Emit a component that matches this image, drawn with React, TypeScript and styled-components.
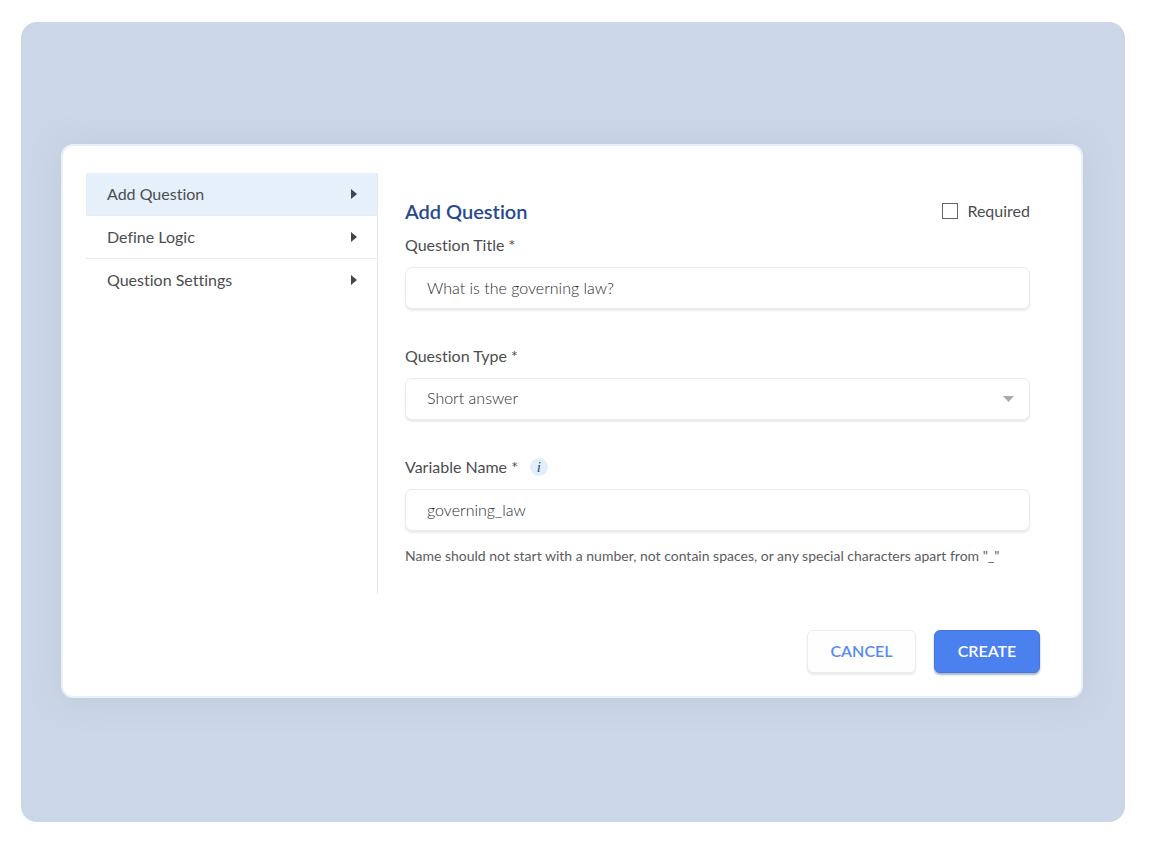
import React, { useState } from "react";
import styled, { createGlobalStyle } from "styled-components";

const GlobalStyle = createGlobalStyle`
  *, *::before, *::after { box-sizing: border-box; }
  body {
    margin: 0;
    background: #ffffff;
    color: #4c4d50;
    font-family: Lato, "Liberation Sans", sans-serif;
    font-size: 16px;
    line-height: 20px;
    font-variant-ligatures: none;
  }
  button, input, select { font: inherit; color: inherit; font-variant-ligatures: none; }
`;

const Page = styled.div`
  min-height: 100vh;
  display: flex;
  padding: 22px 25px 24px 21px;
`;

const Backdrop = styled.main`
  flex: 1;
  min-width: 0;
  display: flex;
  flex-direction: column;
  justify-content: center;
  padding: 40px 42px 42px 40px;
  border-radius: 16px;
  background: #cbd6e8;
`;

const Dialog = styled.form`
  display: flex;
  flex-direction: column;
  gap: 36px;
  padding: 27px 0 23px 23px;
  border: 2px solid #e8f0fa;
  border-radius: 12px;
  background: #ffffff;
  box-shadow: 0 2px 28px rgba(165, 180, 190, 0.35);
`;

const Body = styled.div`
  display: flex;
`;

const Nav = styled.nav`
  flex: 0 0 292px;
  border-right: 1px solid #e6e8ea;
`;

const NavItem = styled.button<{ $active: boolean }>`
  display: flex;
  align-items: center;
  justify-content: space-between;
  width: 100%;
  height: 43px;
  padding: 0 20px 0 21px;
  border: 0;
  border-bottom: 1px solid #e9ebec;
  background: ${(p) => (p.$active ? "#e6f0fa" : "transparent")};
  text-align: left;
  cursor: pointer;

  &:last-child { border-bottom-color: transparent; }
`;

const Panel = styled.section`
  flex: 1;
  min-width: 0;
  padding: 26px 51px 29px 27px;
`;

const PanelHeader = styled.div`
  display: flex;
  align-items: center;
  justify-content: space-between;
  margin-bottom: 12px;
`;

const Title = styled.h1`
  margin: 0;
  color: #27498f;
  font-size: 20px;
  line-height: 24px;
  font-weight: 600;
`;

const CheckLabel = styled.label`
  display: flex;
  align-items: center;
  gap: 9px;
`;

const CheckBox = styled.input`
  appearance: none;
  width: 16px;
  height: 16px;
  margin: 0;
  border: 1px solid #636466;
  background: #ffffff;

  &:checked { background: #4a80ee; }
`;

const Fields = styled.div`
  display: flex;
  flex-direction: column;
  gap: 37px;
`;

const Field = styled.div`
  display: flex;
  flex-direction: column;
  gap: 12px;
`;

const LabelRow = styled.div`
  display: flex;
  align-items: center;
  gap: 12px;
`;

const InfoBadge = styled.button`
  display: grid;
  place-items: center;
  width: 18px;
  height: 18px;
  padding: 0;
  border: 0;
  border-radius: 50%;
  background: #e3eefa;
  color: #27498f;
  font-family: "Liberation Serif", serif;
  font-size: 15px;
  font-style: italic;
  line-height: 18px;
`;

const TextInput = styled.input`
  width: 100%;
  height: 42px;
  padding: 0 21px 2px;
  border: 1px solid #ebebec;
  border-radius: 7px;
  background: #ffffff;
  box-shadow: 0 2px 2px rgba(0, 0, 0, 0.08);
  color: #2c2d30;
  font-weight: 300;
`;

const SelectWrap = styled.div`
  position: relative;
`;

const SelectInput = styled(TextInput).attrs({ as: "select" })`
  appearance: none;
  display: block;
`;

const SelectCaret = styled.svg`
  position: absolute;
  top: 18px;
  right: 16px;
  pointer-events: none;
`;

const Hint = styled.p`
  margin: 4px 0 0;
  color: #5c5d60;
  font-size: 14px;
  line-height: 18px;
`;

const Footer = styled.footer`
  display: flex;
  justify-content: flex-end;
  gap: 18px;
  padding-right: 41px;
`;

const Button = styled.button<{ $primary?: boolean }>`
  min-width: ${(p) => (p.$primary ? 106 : 109)}px;
  height: 43px;
  padding: 0 20px 2px;
  border: 1px solid ${(p) => (p.$primary ? "#4577e2" : "#ececee")};
  border-radius: 6px;
  background: ${(p) => (p.$primary ? "#4b80ef" : "#fefefe")};
  box-shadow: 0 2px 2px ${(p) => (p.$primary ? "rgba(40, 70, 120, 0.4)" : "rgba(0, 0, 0, 0.08)")};
  color: ${(p) => (p.$primary ? "#ffffff" : "#568bea")};
  font-weight: 600;
  cursor: pointer;
`;

const sections = ["Add Question", "Define Logic", "Question Settings"];

export default function App() {
  const [active, setActive] = useState(sections[0]);

  return (
    <>
      <GlobalStyle />
      <Page>
        <Backdrop>
          <Dialog onSubmit={(e: React.FormEvent) => e.preventDefault()}>
            <Body>
              <Nav>
                {sections.map((name) => (
                  <NavItem
                    key={name}
                    type="button"
                    $active={name === active}
                    onClick={() => setActive(name)}
                  >
                    {name}
                    <svg width="6" height="10" viewBox="0 0 6 10" aria-hidden="true">
                      <path d="M0 0L6 5L0 10Z" fill="#444548" />
                    </svg>
                  </NavItem>
                ))}
              </Nav>
              <Panel>
                <PanelHeader>
                  <Title>Add Question</Title>
                  <CheckLabel>
                    <CheckBox type="checkbox" />
                    Required
                  </CheckLabel>
                </PanelHeader>
                <Fields>
                  <Field>
                    <label htmlFor="question-title">Question Title *</label>
                    <TextInput id="question-title" defaultValue="What is the governing law?" />
                  </Field>
                  <Field>
                    <label htmlFor="question-type">Question Type *</label>
                    <SelectWrap>
                      <SelectInput id="question-type">
                        <option>Short answer</option>
                      </SelectInput>
                      <SelectCaret width="11" height="6" viewBox="0 0 11 6" aria-hidden="true">
                        <path d="M0 0H11L5.5 6Z" fill="#a9aaac" />
                      </SelectCaret>
                    </SelectWrap>
                  </Field>
                  <Field>
                    <LabelRow>
                      <label htmlFor="variable-name">Variable Name *</label>
                      <InfoBadge type="button">i</InfoBadge>
                    </LabelRow>
                    <TextInput id="variable-name" defaultValue="governing_law" />
                    <Hint>
                      Name should not start with a number, not contain spaces, or any special
                      characters apart from "_"
                    </Hint>
                  </Field>
                </Fields>
              </Panel>
            </Body>
            <Footer>
              <Button type="button">CANCEL</Button>
              <Button type="submit" $primary>CREATE</Button>
            </Footer>
          </Dialog>
        </Backdrop>
      </Page>
    </>
  );
}
